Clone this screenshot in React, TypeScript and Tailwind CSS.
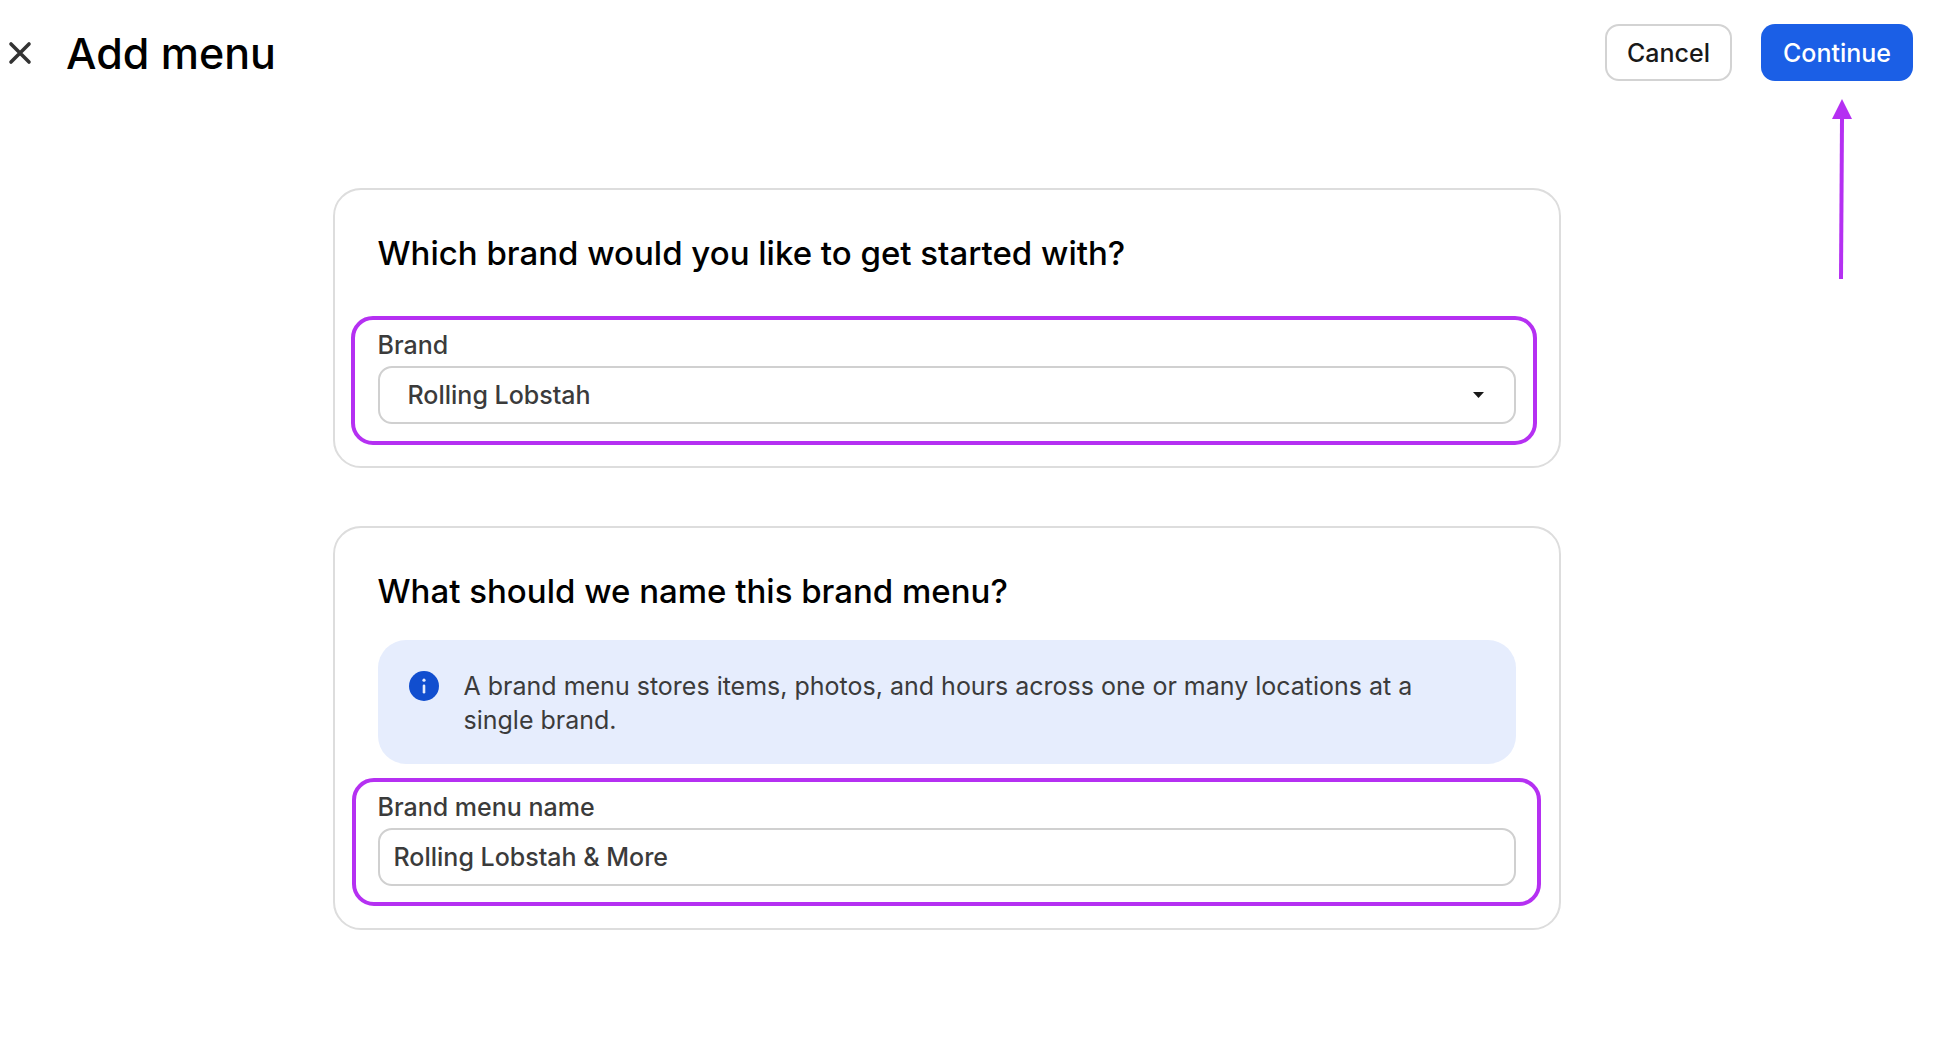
import React, { useState } from 'react';

interface CardProps {
  title: string;
  children: React.ReactNode;
}

const Card: React.FC<CardProps> = ({ title, children }) => (
  <section className="rounded-[28px] border-2 border-[#dddddd] px-[43px] pt-[43px] pb-[42px]">
    <h2 className="text-[33px] leading-10 font-medium text-black">{title}</h2>
    {children}
  </section>
);

const CloseIcon = () => (
  <svg className="size-6" viewBox="0 0 24 24" fill="none" aria-hidden="true">
    <path
      d="M3 3L21 21M21 3L3 21"
      stroke="#333333"
      strokeWidth="3.6"
      strokeLinecap="round"
    />
  </svg>
);

const InfoIcon = () => (
  <svg className="mt-[2px] size-[30px] shrink-0" viewBox="0 0 30 30" aria-hidden="true">
    <circle cx="15" cy="15" r="15" fill="#114ecf" />
    <circle cx="15" cy="9.2" r="1.6" fill="#e6edfd" />
    <path d="M15 14.8V21.2" stroke="#e6edfd" strokeWidth="2.6" strokeLinecap="round" />
  </svg>
);

const ContinueArrow = () => (
  <svg
    className="pointer-events-none absolute top-[75px] left-[71px] h-[180px] w-5"
    viewBox="0 0 20 180"
    aria-hidden="true"
  >
    <path d="M10 0L20 20H0Z" fill="#b530f2" />
    <path d="M10 19L9 180" stroke="#b530f2" strokeWidth="4" />
  </svg>
);

export default function App() {
  const [brand, setBrand] = useState('Rolling Lobstah');
  const [menuName, setMenuName] = useState('Rolling Lobstah & More');

  return (
    <div className="min-h-screen bg-white font-['Inter',sans-serif] text-[25px] leading-7 text-[#3b3b3b]">
      <header className="flex items-center justify-between py-6 pr-[22px] pl-2">
        <div className="flex items-center gap-[34px]">
          <button type="button" aria-label="Close">
            <CloseIcon />
          </button>
          <h1 className="text-[43px] leading-[56px] font-medium text-black">Add menu</h1>
        </div>
        <div className="flex gap-[29px]">
          <button
            type="button"
            className="h-[57px] rounded-[14px] border-2 border-[#d3d3d3] px-5 font-medium text-[#191919]"
          >
            Cancel
          </button>
          <div className="relative">
            <button
              type="button"
              className="h-[57px] rounded-[14px] bg-[#1b5fe6] px-[22px] font-medium text-white"
            >
              Continue
            </button>
            <ContinueArrow />
          </div>
        </div>
      </header>

      <main className="pt-[83px] pr-[42px] pb-12">
        <div className="mx-auto flex max-w-[1228px] flex-col gap-[58px]">
          <Card title="Which brand would you like to get started with?">
            <div className="relative mt-[58px] flex flex-col gap-[7px]">
              <label htmlFor="brand" className="font-medium">
                Brand
              </label>
              <div className="relative">
                <select
                  id="brand"
                  value={brand}
                  onChange={(e) => setBrand(e.target.value)}
                  className="h-[58px] w-full appearance-none rounded-[14px] border-2 border-[#d0d0d0] bg-white px-7 font-medium"
                >
                  <option>Rolling Lobstah</option>
                </select>
                <svg
                  className="pointer-events-none absolute top-[26px] right-8 h-[6px] w-[11px]"
                  viewBox="0 0 11 6"
                  aria-hidden="true"
                >
                  <path d="M0 0H11L5.5 6Z" fill="#191919" />
                </svg>
              </div>
              <div className="pointer-events-none absolute -top-[15px] -right-[21px] -bottom-[21px] -left-[27px] rounded-[22px] border-4 border-[#b530f2]" />
            </div>
          </Card>

          <Card title="What should we name this brand menu?">
            <div className="mt-[29px] flex gap-[25px] rounded-[28px] bg-[#e6edfd] pt-[29px] pr-9 pb-[27px] pl-[31px]">
              <InfoIcon />
              <p className="leading-[34px]">
                A brand menu stores items, photos, and hours across one or many locations at a
                single brand.
              </p>
            </div>
            <div className="relative mt-[29px] flex flex-col gap-[7px]">
              <label htmlFor="menu-name" className="font-medium">
                Brand menu name
              </label>
              <input
                id="menu-name"
                type="text"
                value={menuName}
                onChange={(e) => setMenuName(e.target.value)}
                className="h-[58px] w-full rounded-[14px] border-2 border-[#d0d0d0] bg-white px-[14px] font-medium"
              />
              <div className="pointer-events-none absolute -top-[15px] -right-[25px] -bottom-[20px] -left-[26px] rounded-[22px] border-4 border-[#b530f2]" />
            </div>
          </Card>
        </div>
      </main>
    </div>
  );
}
